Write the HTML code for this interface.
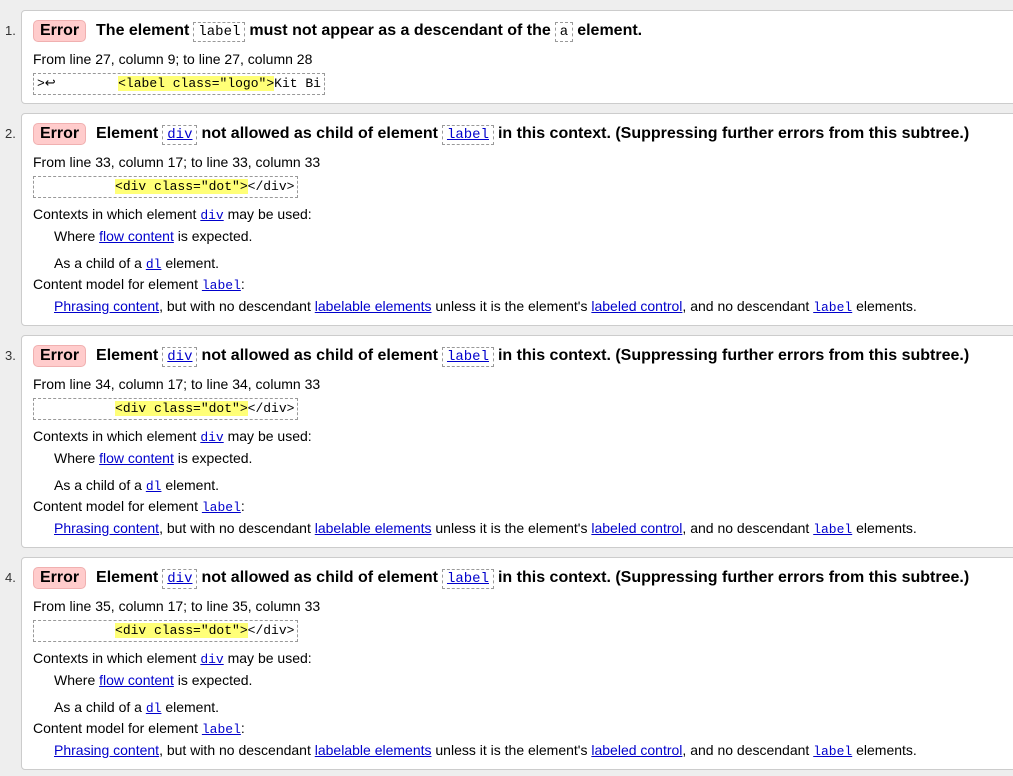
<!DOCTYPE html>
<html><head><meta charset="utf-8"><style>
body{margin:0;background:#eee;font-family:"Liberation Sans",Arial,sans-serif;font-size:14px;color:#000;width:1013px;height:776px;overflow:hidden;position:relative}
.box{position:absolute;left:21px;width:1000px;background:#fff;border:1px solid #ccc;border-radius:4px;box-sizing:border-box}
.num{position:absolute;left:5px;font-size:13px;color:#333}
.l{position:absolute;white-space:nowrap;line-height:20px}
.h{font-weight:bold;font-size:16px}
.err{display:inline-block;background:#fcc;border:1px solid #f0b0b0;border-radius:5px;padding:0 6px;line-height:20px;font-size:16px;margin-right:6px}
.c{font-family:"Liberation Mono",monospace;font-weight:normal;font-size:14px;border:1px dashed #999;padding:1px 4px;margin:0 4px}
a{color:#00c;text-decoration:underline}
.m{font-family:"Liberation Mono",monospace;font-size:13px}
.cb{position:absolute;left:11px;height:22px;border:1px dashed #999;box-sizing:border-box;font-family:"Liberation Mono",monospace;font-size:13px;line-height:20px;white-space:pre;padding:0 3px}
.y{background:#ff7}
</style></head><body>

<div class="num" style="top:23px">1.</div>
<div class="box" style="top:10px;height:94px">
<div class="l" style="left:11px;top:9px"><span class="err h">Error</span> <span class="h">The element<span class="c">label</span>must not appear as a descendant of the<span class="c">a</span>element.</span></div>
<div class="l" style="left:11px;top:38px">From line 27, column 9; to line 27, column 28</div>
<div class="cb" style="top:62px;width:292px">&gt;↩        <span class="y">&lt;label class="logo"&gt;</span>Kit Bi</div>
</div>

<div class="num" style="top:126px">2.</div>
<div class="box" style="top:113px;height:213px" id="b2">
<div class="l" style="left:11px;top:9px"><span class="err h">Error</span> <span class="h">Element<span class="c"><a>div</a></span>not allowed as child of element<span class="c"><a>label</a></span>in this context. (Suppressing further errors from this subtree.)</span></div>
<div class="l" style="left:11px;top:38px">From line 33, column 17; to line 33, column 33</div>
<div class="cb" style="top:62px;width:265px">          <span class="y">&lt;div class="dot"&gt;</span>&lt;/div&gt;</div>
<div class="l" style="left:11px;top:90px">Contexts in which element <a class="m">div</a> may be used:</div>
<div class="l" style="left:32px;top:112px">Where <a>flow content</a> is expected.</div>
<div class="l" style="left:32px;top:139px">As a child of a <a class="m">dl</a> element.</div>
<div class="l" style="left:11px;top:160px">Content model for element <a class="m">label</a>:</div>
<div class="l" style="left:32px;top:182px"><a>Phrasing content</a>, but with no descendant <a>labelable elements</a> unless it is the element's <a>labeled control</a>, and no descendant <a class="m">label</a> elements.</div>
</div>

<div class="num" style="top:348px">3.</div>
<div class="box" style="top:335px;height:213px">
<div class="l" style="left:11px;top:9px"><span class="err h">Error</span> <span class="h">Element<span class="c"><a>div</a></span>not allowed as child of element<span class="c"><a>label</a></span>in this context. (Suppressing further errors from this subtree.)</span></div>
<div class="l" style="left:11px;top:38px">From line 34, column 17; to line 34, column 33</div>
<div class="cb" style="top:62px;width:265px">          <span class="y">&lt;div class="dot"&gt;</span>&lt;/div&gt;</div>
<div class="l" style="left:11px;top:90px">Contexts in which element <a class="m">div</a> may be used:</div>
<div class="l" style="left:32px;top:112px">Where <a>flow content</a> is expected.</div>
<div class="l" style="left:32px;top:139px">As a child of a <a class="m">dl</a> element.</div>
<div class="l" style="left:11px;top:160px">Content model for element <a class="m">label</a>:</div>
<div class="l" style="left:32px;top:182px"><a>Phrasing content</a>, but with no descendant <a>labelable elements</a> unless it is the element's <a>labeled control</a>, and no descendant <a class="m">label</a> elements.</div>
</div>

<div class="num" style="top:570px">4.</div>
<div class="box" style="top:557px;height:213px">
<div class="l" style="left:11px;top:9px"><span class="err h">Error</span> <span class="h">Element<span class="c"><a>div</a></span>not allowed as child of element<span class="c"><a>label</a></span>in this context. (Suppressing further errors from this subtree.)</span></div>
<div class="l" style="left:11px;top:38px">From line 35, column 17; to line 35, column 33</div>
<div class="cb" style="top:62px;width:265px">          <span class="y">&lt;div class="dot"&gt;</span>&lt;/div&gt;</div>
<div class="l" style="left:11px;top:90px">Contexts in which element <a class="m">div</a> may be used:</div>
<div class="l" style="left:32px;top:112px">Where <a>flow content</a> is expected.</div>
<div class="l" style="left:32px;top:139px">As a child of a <a class="m">dl</a> element.</div>
<div class="l" style="left:11px;top:160px">Content model for element <a class="m">label</a>:</div>
<div class="l" style="left:32px;top:182px"><a>Phrasing content</a>, but with no descendant <a>labelable elements</a> unless it is the element's <a>labeled control</a>, and no descendant <a class="m">label</a> elements.</div>
</div>

</body></html>
